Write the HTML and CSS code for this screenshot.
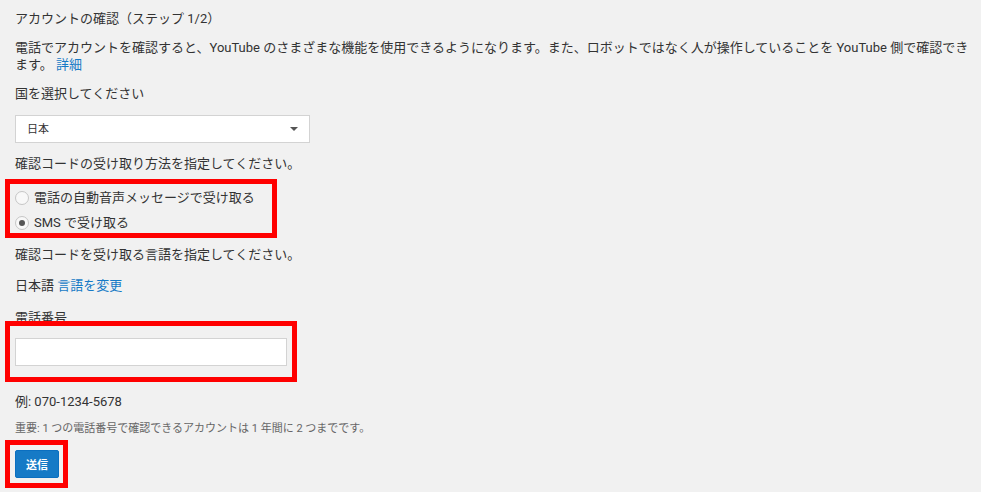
FILE: index.html
```html
<!DOCTYPE html>
<html lang="ja">
<head>
<meta charset="utf-8">
<link rel="stylesheet" href="styles.css">
</head>
<body>
<div class="page">
  <div class="title">アカウントの確認（ステップ 1/2）</div>
  <p class="desc">電話でアカウントを確認すると、YouTube のさまざまな機能を使用できるようになります。また、ロボットではなく人が操作していることを YouTube 側で確認できます。 <a class="link">詳細</a></p>
  <div class="label country-label">国を選択してください</div>
  <div class="select">
    <span class="select-text">日本</span>
    <span class="arrow"></span>
  </div>
  <div class="label method-label">確認コードの受け取り方法を指定してください。</div>
  <div class="radios">
    <div class="radio-row"><span class="radio"></span><span>電話の自動音声メッセージで受け取る</span></div>
    <div class="radio-row"><span class="radio checked"></span><span>SMS で受け取る</span></div>
  </div>
  <div class="label lang-label">確認コードを受け取る言語を指定してください。</div>
  <div class="label lang-value">日本語 <a class="link">言語を変更</a></div>
  <div class="label phone-label">電話番号</div>
  <div class="input"></div>
  <div class="label example">例: 070-1234-5678</div>
  <div class="note">重要: 1 つの電話番号で確認できるアカウントは 1 年間に 2 つまでです。</div>
  <button class="submit">送信</button>

  <div class="hl hl-radios"></div>
  <div class="hl hl-input"></div>
  <div class="hl hl-button"></div>
</div>
</body>
</html>
```

FILE: styles.css
```css
html, body {
  margin: 0;
  padding: 0;
  background: #f1f1f1;
}
.page {
  position: relative;
  width: 981px;
  height: 492px;
  box-sizing: border-box;
  padding: 10px 8px 0 15px;
  font-family: "Roboto", "Noto Sans CJK JP", sans-serif;
  font-size: 13px;
  line-height: 17px;
  color: #333;
  overflow: hidden;
}
.title {
  height: 17px;
}
.desc {
  margin: 12px 0 0 0;
}
.link {
  color: #167ac6;
  text-decoration: none;
}
.label {
  height: 17px;
}
.country-label { margin-top: 12px; }
.select {
  margin-top: 13px;
  width: 295px;
  height: 28px;
  box-sizing: border-box;
  border: 1px solid #d3d3d3;
  background: #fff;
  display: flex;
  align-items: center;
  justify-content: space-between;
  padding: 0 11px 0 11px;
  font-size: 11px;
}
.arrow {
  width: 0;
  height: 0;
  border-left: 4px solid transparent;
  border-right: 4px solid transparent;
  border-top: 4px solid #555;
}
.method-label { margin-top: 12px; }
.radios {
  margin-top: 13px;
  display: flex;
  flex-direction: column;
}
.radio-row {
  height: 25px;
  display: flex;
  align-items: center;
  gap: 5px;
}
.radio {
  width: 14px;
  height: 14px;
  box-sizing: border-box;
  border: 1px solid #c6c6c6;
  border-radius: 50%;
  background: #f8f8f8;
  display: flex;
  align-items: center;
  justify-content: center;
}
.radio.checked::after {
  content: "";
  width: 6px;
  height: 6px;
  border-radius: 50%;
  background: #555;
}
.lang-label { margin-top: 11px; }
.lang-value { margin-top: 14px; }
.phone-label { margin-top: 15px; }
.input {
  margin-top: 12px;
  width: 272px;
  height: 28px;
  box-sizing: border-box;
  border: 1px solid #d3d3d3;
  background: #fff;
}
.example { margin-top: 27px; }
.note {
  margin-top: 11px;
  font-size: 11px;
  line-height: 16px;
  color: #666;
}
.submit {
  display: block;
  margin-top: 13px;
  width: 44px;
  height: 28px;
  padding: 0;
  border: 1px solid #0b6fc0;
  border-radius: 2px;
  background: #167ac6;
  color: #fff;
  font-family: "Roboto", "Noto Sans CJK JP", sans-serif;
  font-size: 11px;
  font-weight: bold;
}
.hl {
  position: absolute;
  box-sizing: border-box;
  border: 5px solid #ff0000;
}
.hl-radios { left: 5px; top: 179px; width: 272px; height: 59px; }
.hl-input { left: 5px; top: 321px; width: 292px; height: 61px; }
.hl-button { left: 5px; top: 440px; width: 63px; height: 48px; }
```
